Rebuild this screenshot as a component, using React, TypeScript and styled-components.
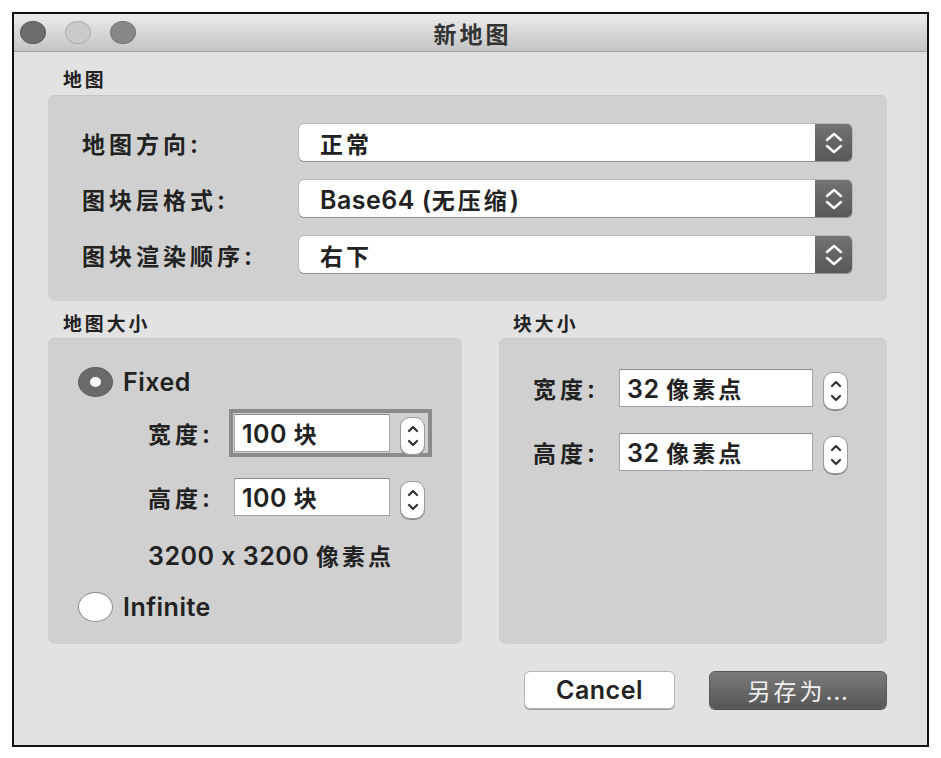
import React from 'react';
import styled, { createGlobalStyle } from 'styled-components';

const FONT = `Inter, "Noto Sans CJK SC", sans-serif`;

const Global = createGlobalStyle`
  html, body { margin: 0; padding: 0; background: #ffffff; }
  body { font-family: ${FONT}; font-feature-settings: "calt" 0; }
  * { box-sizing: border-box; }
`;

/* CJK runs are set a touch smaller than the Latin text and spaced out, as in the macOS original */
const Han = styled.span<{ $gap?: number }>`
  font-size: 0.92em;
  letter-spacing: ${(p) => p.$gap ?? 4}px;
`;

const Lat = styled.span`
  letter-spacing: 0.5px;
`;

const Txt = ({ children, gap }: { children: string; gap?: number }) => (
  <span>
    {children
      .split(/([\u3400-\u9fff]+)/)
      .filter((s) => s.length)
      .map((s, i) =>
        /[\u3400-\u9fff]/.test(s) ? (
          <Han key={i} $gap={gap}>
            {s}
          </Han>
        ) : (
          <Lat key={i}>{s}</Lat>
        )
      )}
  </span>
);

const Window = styled.div`
  width: 917px;
  height: 735px;
  margin: 12px 0 0 12px;
  border: 2px solid #111;
  background: #e2e2e2;
  display: flex;
  flex-direction: column;
  font-family: ${FONT};
  font-feature-settings: "calt" 0;
  color: #222;
`;

const TitleBar = styled.div`
  height: 38px;
  flex: none;
  border-bottom: 1px solid #9e9e9e;
  background: linear-gradient(#ececec, #c4c4c4);
  display: grid;
  grid-template-columns: 1fr auto 1fr;
  align-items: center;
  padding: 0 6px;
`;

const Lights = styled.div`
  display: flex;
  gap: 19px;
`;

const Light = styled.span<{ $fill: string; $edge: string }>`
  width: 26px;
  height: 23px;
  border-radius: 50%;
  background: ${(p) => p.$fill};
  border: 1px solid ${(p) => p.$edge};
`;

const Title = styled.div`
  font-size: 25px;
  font-weight: 600;
  color: #333;
  padding-left: 4px;
`;

const Body = styled.div`
  padding: 18px 40px 0 34px;
  display: flex;
  flex-direction: column;
`;

const SectionLabel = styled.div<{ $indent: number; $below?: number }>`
  height: 20px;
  line-height: 20px;
  font-size: 20.5px;
  font-weight: 600;
  padding-left: ${(p) => p.$indent}px;
  margin-bottom: ${(p) => p.$below ?? 5}px;
`;

const GroupBox = styled.div`
  background: #d0d0d0;
  border-radius: 7px;
  box-shadow: inset 0 1px 0 #c6c6c6;
`;

const MapBox = styled(GroupBox)`
  height: 206px;
  padding: 29px 35px 0 34px;
  display: grid;
  grid-template-columns: 217px 1fr;
  grid-auto-rows: 37px;
  row-gap: 19px;
  align-items: center;
`;

const RowLabel = styled.div`
  font-size: 25px;
  font-weight: 600;
  white-space: nowrap;
`;

const Popup = styled.div`
  height: 37px;
  display: flex;
  border-radius: 5px;
  background: #fff;
  box-shadow: 0 1px 0 #8f8f8f, 0 0 0 1px #b9b9b9;
`;

const PopupValue = styled.div`
  flex: 1;
  display: flex;
  align-items: center;
  padding-left: 21px;
  font-size: 25px;
  font-weight: 600;
  white-space: nowrap;
`;

const PopupArrows = styled.div`
  width: 37px;
  flex: none;
  border-radius: 0 5px 5px 0;
  background: linear-gradient(#727272, #585858);
  display: flex;
  align-items: center;
  justify-content: center;
`;

const Columns = styled.div`
  margin-top: 13px;
  display: grid;
  grid-template-columns: 414px 388px;
  column-gap: 37px;
`;

const Column = styled.div`
  display: flex;
  flex-direction: column;
`;

const SizeBox = styled(GroupBox)<{ $top: number; $left: number }>`
  height: 306px;
  padding: ${(p) => p.$top}px 0 0 ${(p) => p.$left}px;
  display: flex;
  flex-direction: column;
`;

const RadioRow = styled.div<{ $top: number }>`
  height: 30px;
  margin-top: ${(p) => p.$top}px;
  display: flex;
  align-items: center;
  gap: 10px;
  font-size: 25px;
  font-weight: 600;
  letter-spacing: 0.5px;
`;

const Radio = styled.span<{ $on?: boolean }>`
  width: 35px;
  height: 30px;
  border-radius: 50%;
  flex: none;
  display: flex;
  align-items: center;
  justify-content: center;
  background: ${(p) => (p.$on ? '#6a6a6a' : '#ffffff')};
  border: 1px solid ${(p) => (p.$on ? '#5e5e5e' : '#8c8c8c')};
  &::after {
    content: '';
    display: ${(p) => (p.$on ? 'block' : 'none')};
    width: 11px;
    height: 10px;
    border-radius: 50%;
    background: #fff;
  }
`;

const FieldRow = styled.div<{ $top: number; $indent: number; $labelW: number }>`
  margin-top: ${(p) => p.$top}px;
  padding-left: ${(p) => p.$indent}px;
  display: grid;
  grid-template-columns: ${(p) => p.$labelW}px auto;
  align-items: center;
  justify-content: start;
`;

const FieldWrap = styled.div<{ $focus?: boolean }>`
  display: flex;
  align-items: center;
  gap: 10px;
  border: 4px solid ${(p) => (p.$focus ? '#8b8b8b' : 'transparent')};
  padding: 1px 3px 1px 1px;
`;

const Input = styled.div<{ $w: number }>`
  width: ${(p) => p.$w}px;
  height: 38px;
  background: #fff;
  border: 1px solid #a2a2a2;
  border-top-color: #8a8a8a;
  display: flex;
  align-items: center;
  padding-left: 7px;
  font-size: 25px;
  font-weight: 600;
  white-space: nowrap;
`;

const Stepper = styled.div`
  width: 25px;
  height: 38px;
  margin: 3px 0 -3px;
  border-radius: 10px;
  background: #fff;
  border: 1px solid #9a9a9a;
  box-shadow: 0 1px 0 #8a8a8a;
  display: flex;
  align-items: center;
  justify-content: center;
`;

const Note = styled.div`
  margin-top: 20px;
  padding-left: 70px;
  height: 30px;
  line-height: 30px;
  font-size: 25px;
  font-weight: 600;
  white-space: nowrap;
`;

const Buttons = styled.div`
  margin-top: 27px;
  display: flex;
  justify-content: flex-end;
  gap: 34px;
`;

const Button = styled.button<{ $primary?: boolean; $w: number }>`
  width: ${(p) => p.$w}px;
  height: 38px;
  border-radius: 6px;
  font-family: ${FONT};
  font-feature-settings: "calt" 0;
  font-size: 25px;
  font-weight: ${(p) => (p.$primary ? 400 : 600)};
  padding: 0;
  color: ${(p) => (p.$primary ? '#f2f2f2' : '#222')};
  background: ${(p) => (p.$primary ? 'linear-gradient(#7b7b7b, #565656)' : '#fff')};
  border: 1px solid ${(p) => (p.$primary ? '#5a5a5a' : '#b4b4b4')};
  box-shadow: 0 1px 0 ${(p) => (p.$primary ? '#4c4c4c' : '#9c9c9c')};
`;

const BigArrows = () => (
  <svg width="18" height="24" viewBox="0 0 18 24" fill="none" stroke="#fff" strokeWidth="2.4" strokeLinecap="round" strokeLinejoin="round">
    <polyline points="2,9 9,3 16,9" />
    <polyline points="2,15 9,21 16,15" />
  </svg>
);

const SmallArrows = () => (
  <svg width="12" height="26" viewBox="0 0 12 26" fill="none" stroke="#333" strokeWidth="2.2" strokeLinecap="round" strokeLinejoin="round">
    <polyline points="2,8 6,4 10,8" />
    <polyline points="2,18 6,22 10,18" />
  </svg>
);

const popups = [
  ['地图方向:', '正常'],
  ['图块层格式:', 'Base64 (无压缩)'],
  ['图块渲染顺序:', '右下'],
];

const Field = ({
  label,
  value,
  w,
  top,
  indent,
  labelW,
  focus,
}: {
  label: string;
  value: string;
  w: number;
  top: number;
  indent: number;
  labelW: number;
  focus?: boolean;
}) => (
  <FieldRow $top={top} $indent={indent} $labelW={labelW}>
    <RowLabel>
      <Txt gap={4}>{label}</Txt>
    </RowLabel>
    <FieldWrap $focus={focus}>
      <Input $w={w}>
        <Txt gap={3}>{value}</Txt>
      </Input>
      <Stepper>
        <SmallArrows />
      </Stepper>
    </FieldWrap>
  </FieldRow>
);

export default function App() {
  return (
    <>
      <Global />
      <Window>
        <TitleBar>
          <Lights>
            <Light $fill="#6c6c6c" $edge="#5c5c5c" />
            <Light $fill="#cacaca" $edge="#aeaeae" />
            <Light $fill="#878787" $edge="#767676" />
          </Lights>
          <Title>
            <Txt gap={3}>新地图</Txt>
          </Title>
          <span />
        </TitleBar>
        <Body>
          <SectionLabel $indent={15}>
            <Txt gap={3}>地图</Txt>
          </SectionLabel>
          <MapBox>
            {popups.map(([l, v]) => (
              <React.Fragment key={l}>
                <RowLabel>
                  <Txt gap={4}>{l}</Txt>
                </RowLabel>
                <Popup>
                  <PopupValue>
                    <Txt gap={3}>{v}</Txt>
                  </PopupValue>
                  <PopupArrows>
                    <BigArrows />
                  </PopupArrows>
                </Popup>
              </React.Fragment>
            ))}
          </MapBox>
          <Columns>
            <Column>
              <SectionLabel $indent={15} $below={4}>
                <Txt gap={3}>地图大小</Txt>
              </SectionLabel>
              <SizeBox $top={29} $left={30}>
                <RadioRow $top={0}>
                  <Radio $on />
                  Fixed
                </RadioRow>
                <Field label="宽度:" value="100 块" w={156} top={12} indent={70} labelW={81} focus />
                <Field label="高度:" value="100 块" w={156} top={16} indent={70} labelW={81} />
                <Note>
                  <Txt gap={3}>3200 x 3200 像素点</Txt>
                </Note>
                <RadioRow $top={21}>
                  <Radio />
                  Infinite
                </RadioRow>
              </SizeBox>
            </Column>
            <Column>
              <SectionLabel $indent={14} $below={4}>
                <Txt gap={3}>块大小</Txt>
              </SectionLabel>
              <SizeBox $top={26} $left={34}>
                <Field label="宽度:" value="32 像素点" w={194} top={0} indent={0} labelW={81} />
                <Field label="高度:" value="32 像素点" w={194} top={16} indent={0} labelW={81} />
              </SizeBox>
            </Column>
          </Columns>
          <Buttons>
            <Button $w={151}>
              <Txt>Cancel</Txt>
            </Button>
            <Button $w={178} $primary>
              <Txt gap={3}>另存为...</Txt>
            </Button>
          </Buttons>
        </Body>
      </Window>
    </>
  );
}
